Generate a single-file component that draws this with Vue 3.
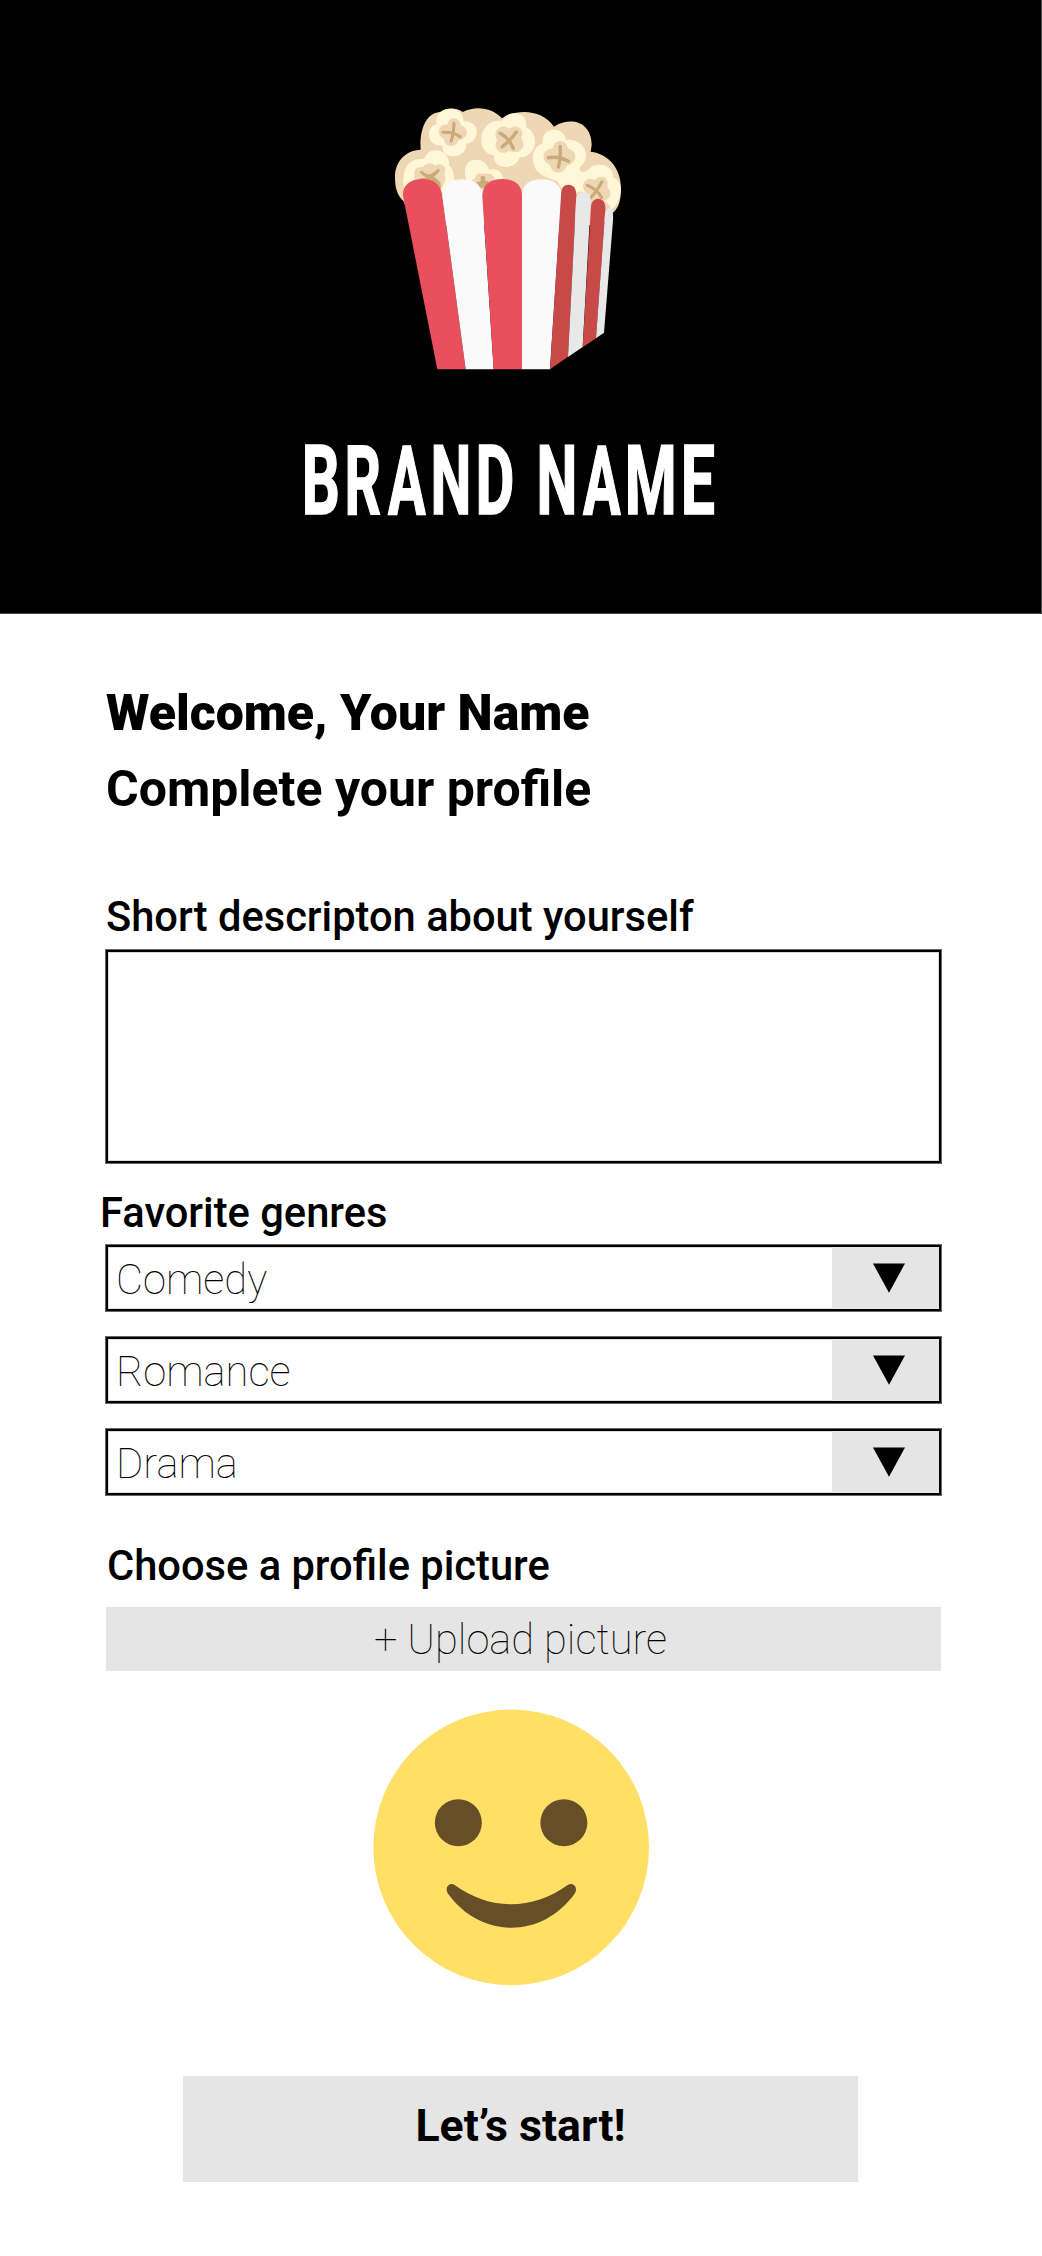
<script setup>
const genres = ['Comedy', 'Romance', 'Drama']

// Popped kernels: cream petals, tan centre and a small cross, each with its own tilt
const kernels = [
  { x: 217, y: 113, r: 12, s: 1 },
  { x: 386, y: 134, r: 47, s: 1.12 },
  { x: 537, y: 187, r: 8, s: 1.13 },
  { x: 648, y: 285, r: 38, s: 1.04 },
]
</script>

<template>
  <div class="page">
    <header class="hero">
      <svg class="popcorn" viewBox="0 0 780 855" aria-hidden="true">
        <path
          fill="#eed7b4"
          d="M70 318C50 300 45 275 45 247C45 197 78 166 122 164C118 105 138 50 184 51C201 36 233 39 248 51C290 31 337 39 366 70C413 39 488 44 522 95C575 62 636 83 635 151L632 170C686 176 724 222 723 281C723 315 716 337 701 351L665 390H100Z"
        />
        <g fill="#fff7d8">
          <path d="M170 88C165 55 184 42 211 41C237 41 252 58 250 79C278 78 291 94 290 111C289 135 274 145 258 146C261 169 241 184 217 184C194 183 185 166 187 151C165 154 148 141 147 121C147 103 154 91 170 88Z" />
          <path d="M366 78C371 61 389 54 408 55C432 57 442 77 437 96C455 103 466 122 465 143C462 171 441 187 419 187C414 207 396 216 376 216C352 214 340 200 342 181C317 179 303 158 304 129C306 96 333 73 366 78Z" />
          <path d="M488 145C485 119 501 104 522 104C543 104 557 118 558 135C584 131 618 148 618 181C617 197 610 207 604 211C596 220 597 231 609 231C620 231 627 222 629 219C640 209 657 207 672 211C691 217 700 230 699 247C716 253 724 270 722 289C719 312 710 334 694 344C685 315 653 304 631 318C626 292 606 284 589 294C584 272 561 264 545 280L531 258C507 249 478 242 465 219C452 190 458 154 488 145Z" />
          <path d="M71 268C67 217 87 189 132 192C139 174 153 164 171 166C194 168 210 189 207 211C220 222 221 239 224 254L180 300H75Z" />
          <path d="M257 247C250 214 263 194 286 194C309 194 324 208 327 224C346 217 365 230 370 249L350 300H280Z" />
        </g>
        <g v-for="k in kernels" :key="k.x" :transform="`translate(${k.x} ${k.y}) rotate(${k.r}) scale(${k.s})`">
          <path
            fill="#eed7b4"
            d="M-19-25C-19-43 4-50 15-36C20-29 19-27 24-26C43-23 49-2 36 10C29 18 23 17 22 22C20 41-4 46-15 34C-19 29-18 24-24 22C-43 17-46-6-34-15C-27-21-20-18-19-25Z"
          />
          <path fill="none" stroke="#c9aa78" stroke-width="9" stroke-linecap="round" d="M-28 5Q0 -4 26 7M-1 -29Q5 0 2 26" />
        </g>
        <g fill="#eed7b4">
          <path d="M104 240C99 224 112 213 129 217C137 202 157 201 165 212C184 200 202 215 194 231C191 239 197 243 197 253L183 285L120 262C108 260 101 251 104 240Z" />
          <path d="M286 250C286 236 300 232 306 237C325 230 344 240 344 254L322 285H292L275 263C275 255 279 250 286 250Z" />
        </g>
        <g fill="#c9aa78">
          <path d="M121 234C118 226 127 227 134 234C145 242 154 239 169 225C180 217 183 226 174 234L162 245L181 262L183 279L120 260V250L138 248Z" />
          <path d="M302 246C305 240 315 240 316 250V258L326 258L322 278H296L277 266L302 258Z" />
        </g>

        <path fill="#ea4f5d" d="M69 302C67 272 90 252 126 252C162 252 183 269 187 302L257 823H172Z" />
        <path fill="#fafafa" d="M187 302C187 270 211 253 247 253C284 253 304 269 307 302L341 823H257Z" />
        <path fill="#ea4f5d" d="M307 302C308 269 331 252 367 252C404 252 426 269 426 302V823H341Z" />
        <path fill="#fafafa" d="M426 302C427 268 449 253 485 253C522 253 544 270 544 302L510 823H426Z" />
        <path fill="#c74a48" d="M543 302C544 278 551 269 566 269C583 270 590 284 589 305L564 785L510 823Z" />
        <path fill="#e8e8e8" d="M588 319C589 301 597 291 612 291C627 293 633 303 632 323L608 756L564 786Z" />
        <path fill="#c74a48" d="M633 335C635 318 643 311 656 311C670 313 678 325 676 345L648 730L608 757Z" />
        <path fill="#e8e8e8" d="M675 357C677 344 683 337 690 339C698 343 700 352 699 376L672 713L648 730Z" />
      </svg>
      <svg class="wordmark" viewBox="0 0 440 140" role="img" aria-label="Brand name">
        <g class="letters" transform="translate(0 104)">
          <text transform="translate(1.7 0) scale(.62 1)">B</text>
          <text transform="translate(44.4 0) scale(.59 1)">R</text>
          <text transform="translate(88 0) scale(.58 1)">A</text>
          <text transform="translate(130.5 0) scale(.6 1)">N</text>
          <text transform="translate(175.4 0) scale(.62 1)">D</text>
          <text transform="translate(236.5 0) scale(.6 1)">N</text>
          <text transform="translate(283 0) scale(.58 1)">A</text>
          <text transform="translate(324.8 0) scale(.615 1)">M</text>
          <text transform="translate(380.8 0) scale(.63 1)">E</text>
        </g>
      </svg>
    </header>

    <main class="form">
      <h1 class="welcome">Welcome, Your Name</h1>
      <h2 class="subtitle">Complete your profile</h2>

      <p class="label about">Short descripton about yourself</p>
      <div class="box textarea"></div>

      <p class="label favorite">Favorite genres</p>
      <div class="selects">
        <div v-for="g in genres" :key="g" class="box select">
          <span class="value">{{ g }}</span>
          <span class="toggle">
            <svg width="32" height="30" viewBox="0 0 32 30"><path d="M0 .5H32L16 29.7Z" /></svg>
          </span>
        </div>
      </div>

      <p class="label picture">Choose a profile picture</p>
      <div class="upload">+ Upload picture</div>

      <svg class="smiley" viewBox="0 0 900 900" aria-hidden="true">
        <circle cx="453.5" cy="442" r="413.5" fill="#ffdf66" />
        <g fill="#664e27">
          <circle cx="295" cy="368" r="70.5" />
          <circle cx="611.5" cy="368" r="70.5" />
          <path d="M284 555C390 632 516 632 623 555C638 545 655 560 645 580C546 718 362 718 263 580C253 561 270 545 284 555Z" />
        </g>
      </svg>

      <div class="start">Let’s start!</div>
    </main>
  </div>
</template>

<style>
body {
  margin: 0;
  background: #fff;
}
</style>

<style scoped>
.page {
  width: 1042px;
  height: 2256px;
  overflow: hidden;
  background: #fff;
  color: #000;
  font-family: Roboto, "Liberation Sans", sans-serif;
}
.hero {
  box-sizing: border-box;
  height: 614px;
  padding-top: 95px;
  background: #000;
  border-right: 1px solid #555;
  border-bottom: 1px solid #444;
}
.popcorn {
  display: block;
  width: 260px;
  height: 285px;
  margin-left: 380px;
}
.wordmark {
  display: block;
  width: 440px;
  height: 140px;
  margin: 30px 0 0 300px;
}
.letters {
  fill: #fff;
  stroke: #fff;
  stroke-width: 1.6px;
  font-size: 96.5px;
  font-weight: 700;
}
.form {
  display: flex;
  flex-direction: column;
  padding: 61px 101px 0 106px;
}
.welcome,
.subtitle {
  margin: 0;
  font-size: 50px;
  line-height: 76px;
  white-space: nowrap;
}
.welcome {
  font-weight: 900;
}
.subtitle {
  font-weight: 700;
}
.label {
  margin: 0;
  font-size: 41.65px;
  line-height: 50px;
  font-weight: 500;
  white-space: nowrap;
}
.about {
  margin: 65px 0 8px;
}
.favorite {
  margin: 25px 0 7px -6px;
}
.picture {
  margin: 46px 0 16px 1px;
}
.box {
  box-sizing: border-box;
  border: 2px solid #000;
  box-shadow: 0 0 0 1px rgba(0, 0, 0, 0.6), inset 0 0 0 1px rgba(0, 0, 0, 0.15);
}
.textarea {
  height: 213px;
}
.selects {
  display: flex;
  flex-direction: column;
  gap: 26px;
}
.select {
  display: flex;
  justify-content: space-between;
  height: 66px;
}
.value {
  padding-left: 8px;
  font-size: 41.7px;
  font-weight: 100;
  line-height: 66px;
}
.toggle {
  display: flex;
  justify-content: center;
  width: 107px;
  box-sizing: border-box;
  padding: 16px 0 0 7px;
  background: #e5e5e5;
}
.upload {
  height: 64px;
  padding-right: 6px;
  background: #e5e5e5;
  font-size: 41.65px;
  font-weight: 100;
  line-height: 65px;
  text-align: center;
}
.smiley {
  width: 300px;
  height: 300px;
  margin: 29px 0 0 254px;
}
.start {
  width: 675px;
  height: 106px;
  margin: 76px 0 0 77px;
  background: #e5e5e5;
  font-size: 44.6px;
  font-weight: 700;
  line-height: 100px;
  text-align: center;
}
</style>
